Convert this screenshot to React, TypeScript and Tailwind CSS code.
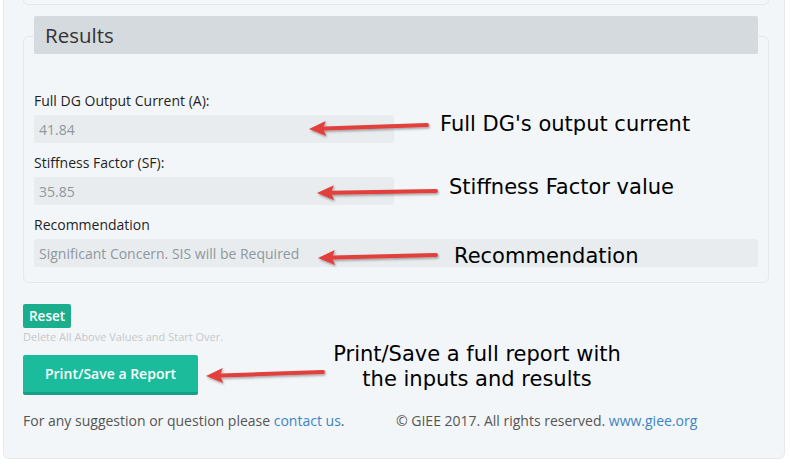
import React from "react";

const sans = "font-['Open_Sans',_'Liberation_Sans',_sans-serif]";
const note = "font-['DejaVu_Sans',_Verdana,_sans-serif]";

type ArrowProps = { tipX: number; tipY: number; tailX: number; tailY: number };

function Arrow({ tipX, tipY, tailX, tailY }: ArrowProps) {
  const dx = tailX - tipX;
  const dy = tailY - tipY;
  const len = Math.sqrt(dx * dx + dy * dy);
  const ux = dx / len;
  const uy = dy / len;
  // arrow head base
  const bx = tipX + ux * 17;
  const by = tipY + uy * 17;
  const px = -uy * 7.5;
  const py = ux * 7.5;
  return (
    <g filter="url(#arrowShadow)">
      <line x1={bx - ux * 2} y1={by - uy * 2} x2={tailX} y2={tailY} stroke="#e2403e" strokeWidth={4} strokeLinecap="round" />
      <polygon
        points={`${tipX},${tipY} ${bx + px},${by + py} ${bx - ux * 3},${by - uy * 3} ${bx - px},${by - py}`}
        fill="#e2403e"
      />
    </g>
  );
}

function Field({ label, value, wide }: { label: string; value: string; wide?: boolean }) {
  return (
    <div className="flex flex-col">
      <label className="text-[14px] leading-[18px] text-[#1f1f1f]">{label}</label>
      <div
        className={`mt-[5px] flex h-[28px] items-center rounded-[2px] bg-[#e8ecee] px-[5px] text-[14px] text-[#8f989e] ${
          wide ? "w-full" : "w-[360px]"
        }`}
      >
        {value}
      </div>
    </div>
  );
}

export default function App() {
  return (
    <div className={`relative h-[467px] w-[790px] overflow-hidden bg-white ${sans}`}>
      <div className="ml-[3px] h-[459px] w-[782px] rounded-b-[6px] border-x border-b border-[#e6eaed] bg-[#f3f6f8] pl-[19px] pr-[17px]">
        {/* tail of the card above */}
        <div className="h-[5px] w-[746px] rounded-b-[5px] border-x border-b border-[#e3e8eb]" />

        {/* Results fieldset */}
        <div className="mt-[31px] w-[746px] rounded-[6px] border border-[#e3e8eb] px-[10px] pb-[15px]">
          <div className="-mt-[21px] flex h-[38px] items-center rounded-[2px] bg-[#d4dadd] px-[11px] text-[20.5px] text-[#333]">
            Results
          </div>
          <div className="mt-[38px] flex flex-col gap-[11px]">
            <Field label="Full DG Output Current (A):" value="41.84" />
            <Field label="Stiffness Factor (SF):" value="35.85" />
            <Field label="Recommendation" value="Significant Concern. SIS will be Required" wide />
          </div>
        </div>

        <button className="mt-[21px] h-[24px] rounded-[2px] bg-[#1aae8d] px-[6px] text-[13.5px] font-semibold text-white">
          Reset
        </button>
        <p className="mt-[2px] text-[11px] leading-[14px] text-[#c4c8cc]">Delete All Above Values and Start Over.</p>

        <button className="mt-[11px] h-[40px] w-[175px] rounded-[2px] border-b-[3px] border-[#16a085] bg-[#1abc9c] text-[14px] font-semibold text-white">
          Print/Save a Report
        </button>

        <div className="mt-[15px] flex text-[14px] text-[#555]">
          <p className="w-[373px]">
            For any suggestion or question please <a className="text-[#3c84c6]">contact us</a>.
          </p>
          <p>
            © GIEE 2017. All rights reserved. <a className="text-[#3c84c6]">www.giee.org</a>
          </p>
        </div>
      </div>

      {/* annotations */}
      <svg className="pointer-events-none absolute inset-0" width={790} height={467}>
        <defs>
          <filter id="arrowShadow" x="-20%" y="-50%" width="140%" height="200%">
            <feDropShadow dx="1" dy="1.5" stdDeviation="1.2" floodColor="#000" floodOpacity="0.35" />
          </filter>
        </defs>
        <Arrow tipX={309} tipY={129} tailX={427} tailY={125} />
        <Arrow tipX={317} tipY={193} tailX={436} tailY={191} />
        <Arrow tipX={318} tipY={258} tailX={436} tailY={255} />
        <Arrow tipX={206} tipY={376} tailX={323} tailY={372} />
      </svg>
      <div className={`absolute left-[440px] top-[114px] text-[21px] leading-none text-[#000] ${note}`}>
        Full DG's output current
      </div>
      <div className={`absolute left-[449px] top-[177px] text-[21px] leading-none text-[#000] ${note}`}>
        Stiffness Factor value
      </div>
      <div className={`absolute left-[454px] top-[246px] text-[21px] leading-none text-[#000] ${note}`}>
        Recommendation
      </div>
      <div className={`absolute left-[322px] top-[342px] w-[310px] text-center text-[21px] leading-[25px] text-[#000] ${note}`}>
        Print/Save a full report with
        <br />
        the inputs and results
      </div>
    </div>
  );
}
